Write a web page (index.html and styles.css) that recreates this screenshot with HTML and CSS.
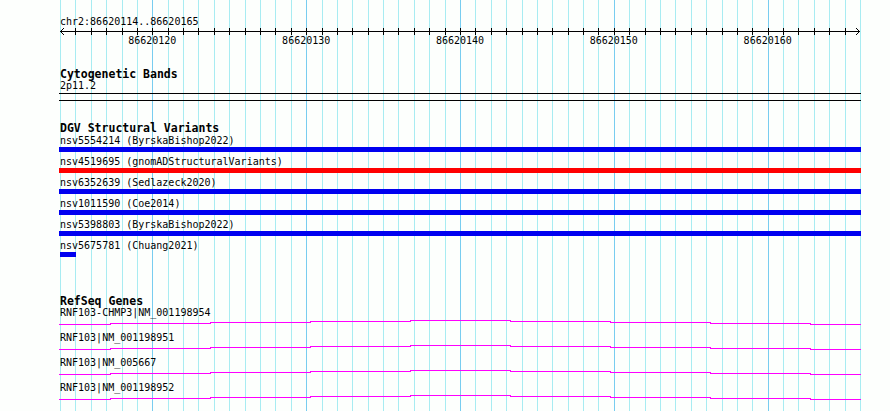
FILE: index.html
```html
<!DOCTYPE html>
<html>
  <head>
    <meta charset="utf-8">
    <title>chr2:86620114..86620165</title>
    <link rel="stylesheet" href="styles.css">
  </head>
  <body>
    <div class="view">

      <svg class="grid" width="890" height="411" viewBox="0 0 890 411" shape-rendering="crispEdges">
        <path class="minor" d="M60.5 0V411M75.5 0V411M91.5 0V411M106.5 0V411M122.5 0V411M137.5 0V411M168.5 0V411M183.5 0V411M198.5 0V411M214.5 0V411M229.5 0V411M245.5 0V411M260.5 0V411M275.5 0V411M291.5 0V411M322.5 0V411M337.5 0V411M352.5 0V411M368.5 0V411M383.5 0V411M398.5 0V411M414.5 0V411M429.5 0V411M445.5 0V411M475.5 0V411M491.5 0V411M506.5 0V411M522.5 0V411M537.5 0V411M552.5 0V411M568.5 0V411M583.5 0V411M598.5 0V411M629.5 0V411M645.5 0V411M660.5 0V411M675.5 0V411M691.5 0V411M706.5 0V411M722.5 0V411M737.5 0V411M752.5 0V411M783.5 0V411M798.5 0V411M814.5 0V411M829.5 0V411M845.5 0V411M860.5 0V411"/>
        <path class="major" d="M152.5 0V411M306.5 0V411M460.5 0V411M614.5 0V411M768.5 0V411"/>
      </svg>

      <div class="tracks">
        <div class="locus">chr2:86620114..86620165</div>

        <svg class="ruler" width="802" height="20" viewBox="59 0 802 20">
          <path class="axis" shape-rendering="crispEdges" d="M60 3.5H860M75.5 0v7M91.5 0v7M106.5 0v7M122.5 0v7M137.5 0v7M152.5 0v7M168.5 0v7M183.5 0v7M198.5 0v7M214.5 0v7M229.5 0v7M245.5 0v7M260.5 0v7M275.5 0v7M291.5 0v7M306.5 0v7M322.5 0v7M337.5 0v7M352.5 0v7M368.5 0v7M383.5 0v7M398.5 0v7M414.5 0v7M429.5 0v7M445.5 0v7M460.5 0v7M475.5 0v7M491.5 0v7M506.5 0v7M522.5 0v7M537.5 0v7M552.5 0v7M568.5 0v7M583.5 0v7M598.5 0v7M614.5 0v7M629.5 0v7M645.5 0v7M660.5 0v7M675.5 0v7M691.5 0v7M706.5 0v7M722.5 0v7M737.5 0v7M752.5 0v7M768.5 0v7M783.5 0v7M798.5 0v7M814.5 0v7M829.5 0v7M845.5 0v7"/>
          <path class="axis" d="M64 0L60.5 3.5L64 7M856 0L859.5 3.5L856 7"/>
          <text x="152.3" y="16">86620120</text>
          <text x="306.2" y="16">86620130</text>
          <text x="460" y="16">86620140</text>
          <text x="613.8" y="16">86620150</text>
          <text x="767.7" y="16">86620160</text>
        </svg>

        <section class="track cyto">
          <h2 class="track-title">Cytogenetic Bands</h2>
          <div class="label">2p11.2</div>
          <div class="band"></div>
        </section>

        <section class="track dgv">
          <h2 class="track-title">DGV Structural Variants</h2>
          <div class="features">
            <div class="feature">
              <div class="label">nsv5554214 (ByrskaBishop2022)</div>
              <div class="bar loss"></div>
            </div>
            <div class="feature">
              <div class="label">nsv4519695 (gnomADStructuralVariants)</div>
              <div class="bar gain"></div>
            </div>
            <div class="feature">
              <div class="label">nsv6352639 (Sedlazeck2020)</div>
              <div class="bar loss"></div>
            </div>
            <div class="feature">
              <div class="label">nsv1011590 (Coe2014)</div>
              <div class="bar loss"></div>
            </div>
            <div class="feature">
              <div class="label">nsv5398803 (ByrskaBishop2022)</div>
              <div class="bar loss"></div>
            </div>
            <div class="feature">
              <div class="label">nsv5675781 (Chuang2021)</div>
              <div class="bar loss short"></div>
            </div>
          </div>
        </section>

        <section class="track refseq">
          <h2 class="track-title">RefSeq Genes</h2>
          <div class="gene">
            <div class="label">RNF103-CHMP3|NM_001198954</div>
            <svg class="gene-line" width="802" height="13" viewBox="59 0 802 13" shape-rendering="crispEdges">
              <path d="M59 5.5H110.5V4.5H210.5V3.5H310.5V2.5H410.5V1.5H510.5V2.5H610.5V3.5H710.5V4.5H810.5V5.5H861"/>
            </svg>
          </div>
          <div class="gene">
            <div class="label">RNF103|NM_001198951</div>
            <svg class="gene-line" width="802" height="13" viewBox="59 0 802 13" shape-rendering="crispEdges">
              <path d="M59 5.5H110.5V4.5H210.5V3.5H310.5V2.5H410.5V1.5H510.5V2.5H610.5V3.5H710.5V4.5H810.5V5.5H861"/>
            </svg>
          </div>
          <div class="gene">
            <div class="label">RNF103|NM_005667</div>
            <svg class="gene-line" width="802" height="13" viewBox="59 0 802 13" shape-rendering="crispEdges">
              <path d="M59 5.5H110.5V4.5H210.5V3.5H310.5V2.5H410.5V1.5H510.5V2.5H610.5V3.5H710.5V4.5H810.5V5.5H861"/>
            </svg>
          </div>
          <div class="gene">
            <div class="label">RNF103|NM_001198952</div>
            <svg class="gene-line" width="802" height="13" viewBox="59 0 802 13" shape-rendering="crispEdges">
              <path d="M59 5.5H110.5V4.5H210.5V3.5H310.5V2.5H410.5V1.5H510.5V2.5H610.5V3.5H710.5V4.5H810.5V5.5H861"/>
            </svg>
          </div>
        </section>
      </div>

    </div>
  </body>
</html>
```

FILE: styles.css
```css
html, body, div, section, h2{
  margin:0px;
  padding:0px;
}
body{
  background-color:#fdfffd;
  font-family:"DejaVu Sans Mono", "Liberation Mono", monospace;
  font-size:10px;
  color:#000;
}
.view{
  position:relative;
  width:890px;
  height:411px;
  overflow:hidden;
  background-color:#fdfffd;
}
.grid{
  position:absolute;
  top:0px;
  left:0px;
}
.grid path{
  fill:none;
  stroke-width:1;
}
.grid .minor{
  stroke:#a8ecf2;
}
.grid .major{
  stroke:#78cdf0;
}
.tracks{
  position:relative;
  width:802px;
  padding:16px 0px 0px 59px;
}
.locus, .label{
  line-height:12px;
  white-space:nowrap;
  padding-left:1px;
}
.ruler, .gene-line{
  display:block;
}
.ruler .axis{
  fill:none;
  stroke:#000;
  stroke-width:1;
}
.ruler text{
  font-family:"DejaVu Sans Mono", "Liberation Mono", monospace;
  font-size:10px;
  text-anchor:middle;
  fill:#000;
}
.track-title{
  font-size:11.5px;
  font-weight:bold;
  line-height:12px;
  padding-left:1px;
}
.cyto{
  margin-top:20px;
}
.band{
  width:802px;
  height:6px;
  margin-top:1px;
  border-top:1px solid #000;
  border-bottom:1px solid #000;
}
.dgv{
  margin-top:21px;
}
.features{
  padding-top:1px;
}
.feature{
  padding-bottom:4px;
}
.bar{
  width:802px;
  height:5px;
}
.bar.loss{
  background-color:#0000f0;
}
.bar.gain{
  background-color:#ff0000;
}
.bar.short{
  width:16px;
  margin-left:1px;
}
.refseq{
  margin-top:34px;
}
.gene-line path{
  fill:none;
  stroke:#ff00ff;
  stroke-width:1;
}
```
